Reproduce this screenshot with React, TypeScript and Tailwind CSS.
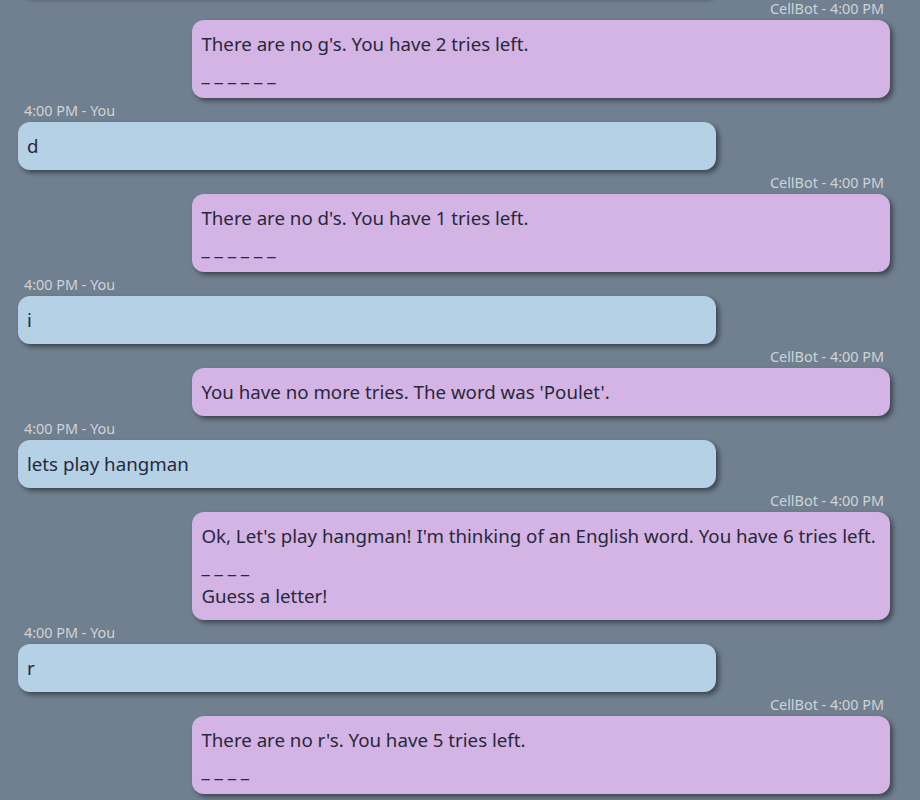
import React from "react";

type Msg = {
  from: "bot" | "user";
  lines: string[];
};

const messages: Msg[] = [
  { from: "bot", lines: ["There are no g's. You have 2 tries left.", "_ _ _ _ _ _"] },
  { from: "user", lines: ["d"] },
  { from: "bot", lines: ["There are no d's. You have 1 tries left.", "_ _ _ _ _ _"] },
  { from: "user", lines: ["i"] },
  { from: "bot", lines: ["You have no more tries. The word was 'Poulet'."] },
  { from: "user", lines: ["lets play hangman"] },
  {
    from: "bot",
    lines: [
      "Ok, Let's play hangman! I'm thinking of an English word. You have 6 tries left.",
      "_ _ _ _",
      "Guess a letter!",
    ],
  },
  { from: "user", lines: ["r"] },
  { from: "bot", lines: ["There are no r's. You have 5 tries left.", "_ _ _ _"] },
];

function Bubble({ msg }: { msg: Msg }) {
  const isBot = msg.from === "bot";
  return (
    <div className={`flex flex-col ${isBot ? "items-end" : "items-start"}`}>
      {/* timestamp label */}
      <div className="px-1.5 text-[14.4px] leading-[18px] text-[#d0d3d6]">
        {isBot ? "CellBot - 4:00 PM" : "4:00 PM - You"}
      </div>
      <div
        className={`mt-[2px] w-4/5 rounded-xl px-[9px] py-[9px] text-[18.7px] leading-[30px] text-[#28283a] shadow-[3px_3px_5px_rgba(0,0,0,0.45)] ${
          isBot ? "bg-[#d3b4e4]" : "bg-[#b4d1e6]"
        }`}
      >
        {msg.lines.map((l, i) => (
          <div key={i} className="whitespace-nowrap">
            {l}
          </div>
        ))}
      </div>
    </div>
  );
}

export default function App() {
  return (
    <div
      className="h-[800px] w-[920px] overflow-hidden bg-[#708090]"
      style={{ fontFamily: '"Noto Sans", "Open Sans", sans-serif' }}
    >
      <div className="-mt-[52px] flex flex-col gap-[4px] pl-[18px] pr-[30px]">
        {/* previous user bubble, scrolled mostly out of view */}
        <div className="h-[48px] w-4/5 rounded-xl bg-[#b4d1e6] shadow-[3px_3px_5px_rgba(0,0,0,0.45)]" />
        {messages.map((m, i) => (
          <Bubble key={i} msg={m} />
        ))}
      </div>
    </div>
  );
}
